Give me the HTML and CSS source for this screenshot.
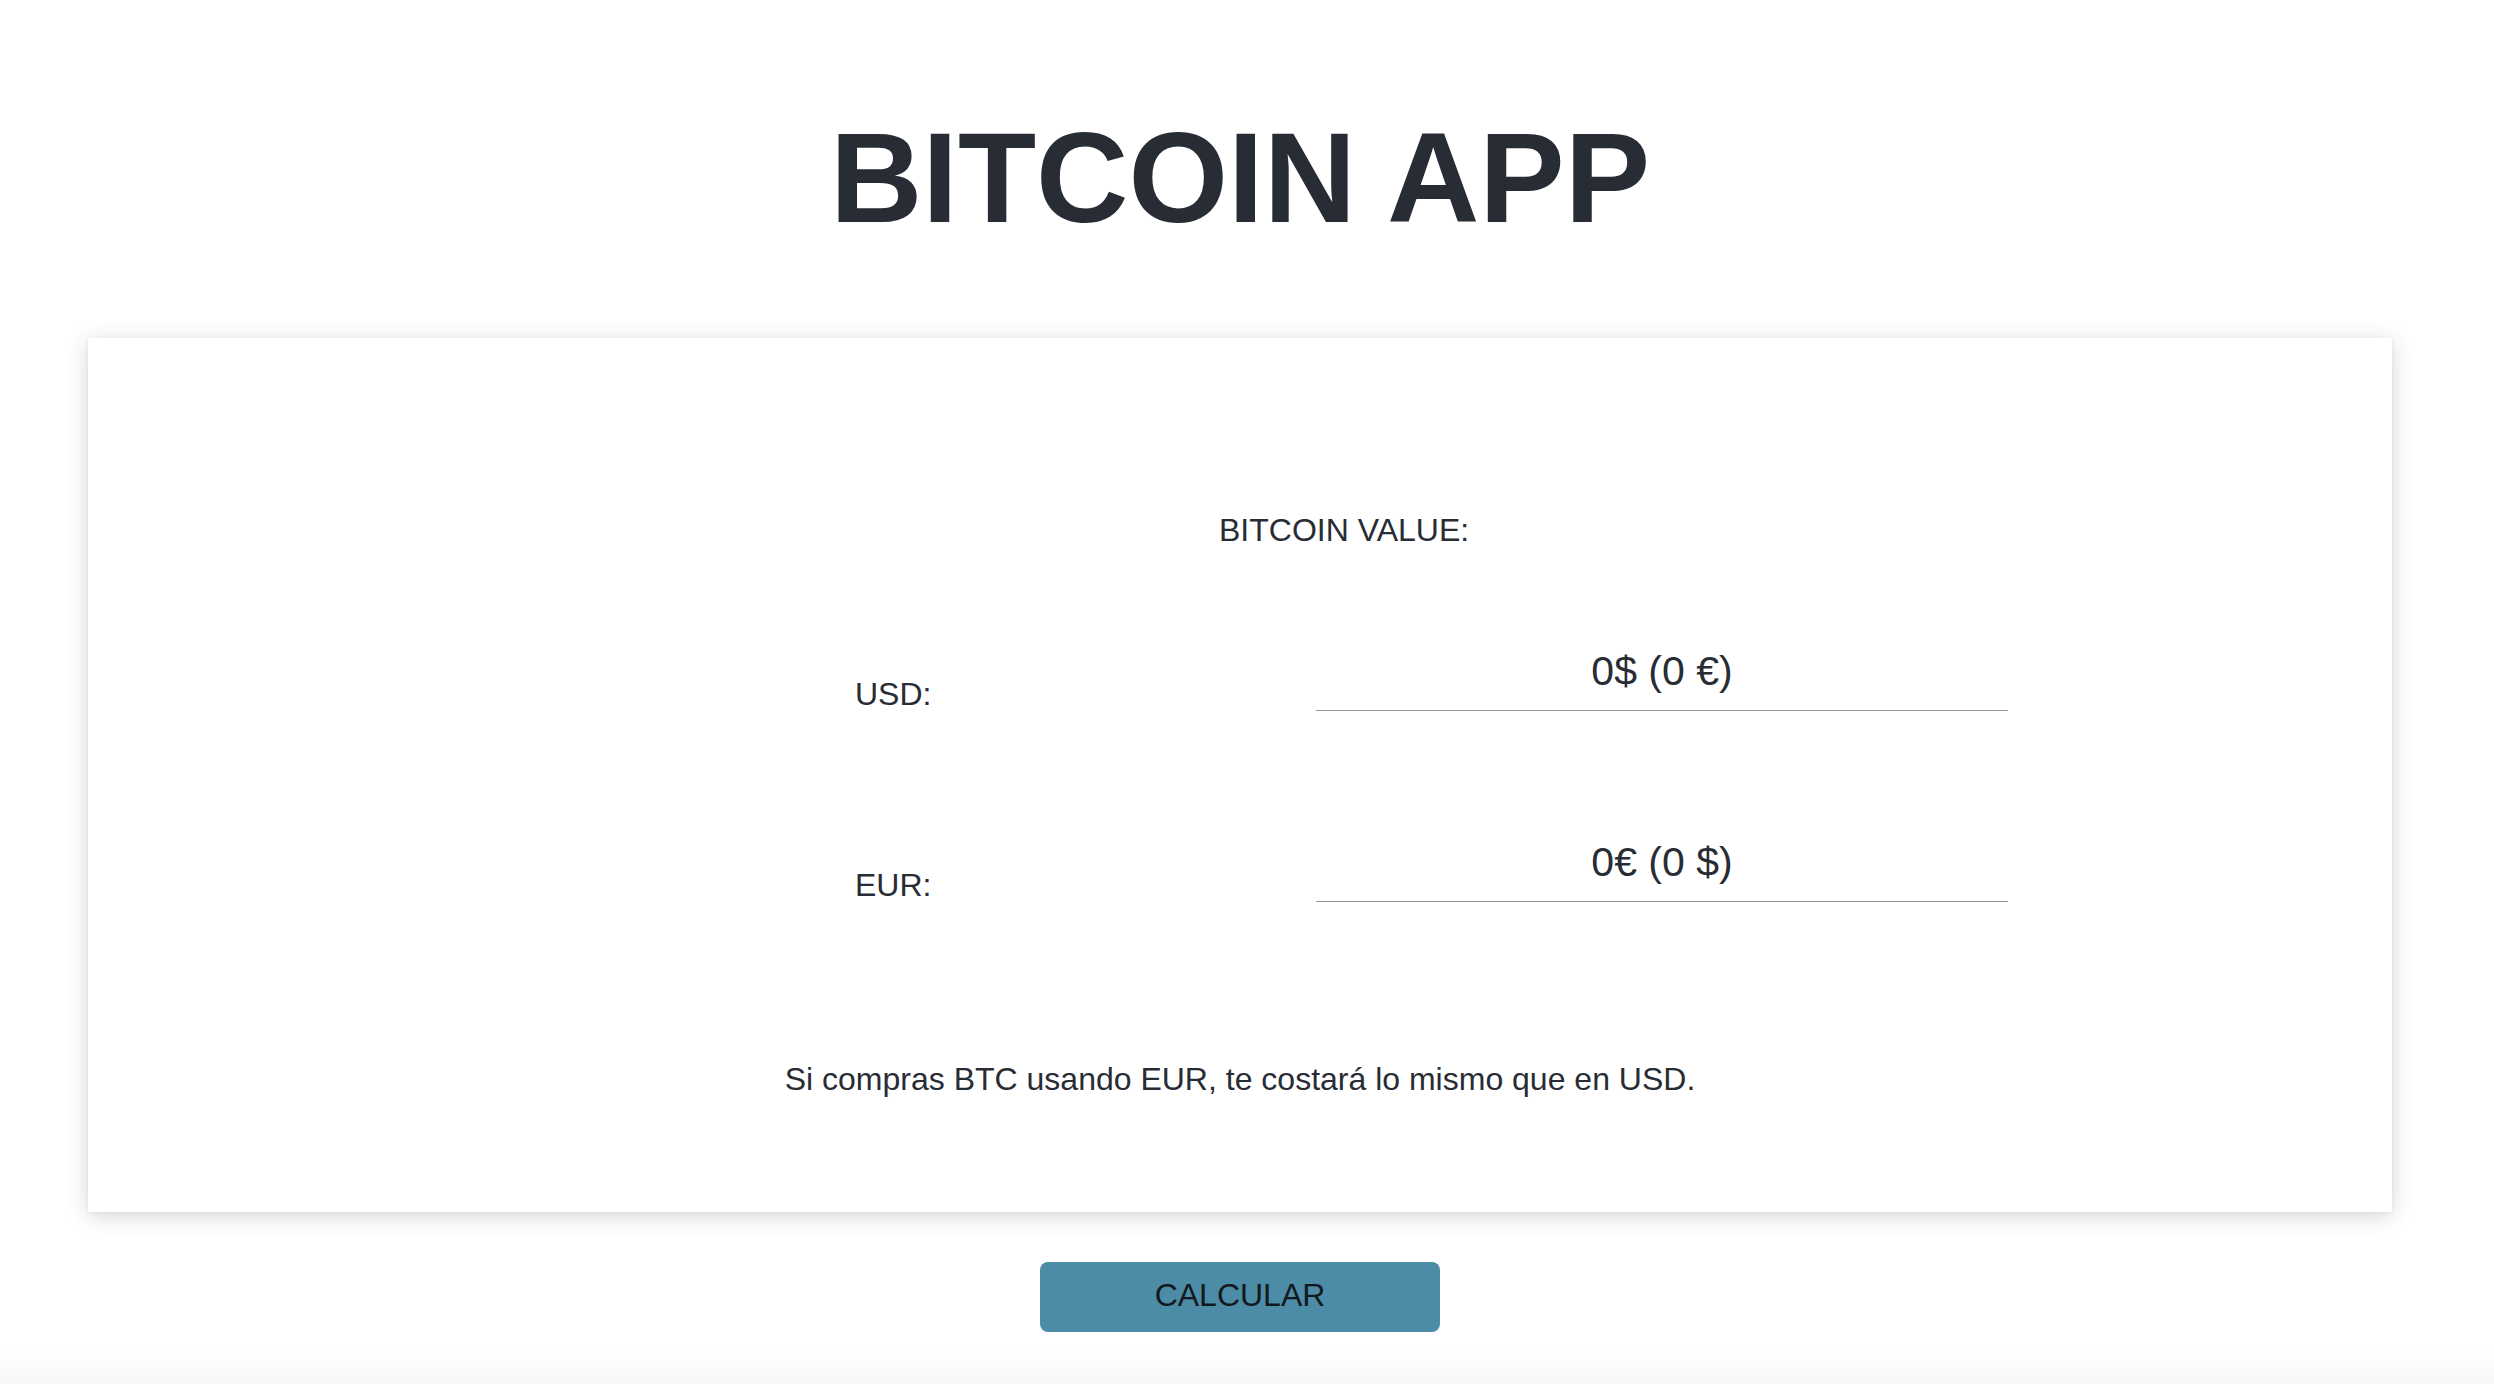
FILE: index.html
```
<!DOCTYPE html>
<html lang="es">
<head>
<meta charset="utf-8">
<title>Bitcoin App</title>
<link rel="stylesheet" href="styles.css">
</head>
<body>
<div class="app">
  <h1 class="title">BITCOIN APP</h1>
  <div class="card">
    <div class="card-head">BITCOIN VALUE:</div>
    <div class="rows">
      <div class="row">
        <div class="label">USD:</div>
        <div class="value">0$ (0 €)</div>
      </div>
      <div class="row">
        <div class="label">EUR:</div>
        <div class="value">0€ (0 $)</div>
      </div>
    </div>
    <p class="note">Si compras BTC usando EUR, te costará lo mismo que en USD.</p>
  </div>
  <div class="actions">
    <button class="btn" type="button">CALCULAR</button>
  </div>
</div>
</body>
</html>
```
FILE: styles.css
```
html, body {
  margin: 0;
  padding: 0;
}
body {
  min-height: 100vh;
  background: linear-gradient(to bottom, #ffffff 0, #ffffff 1350px, #f8f8f8 1384px);
  font-family: "Liberation Sans", Arial, sans-serif;
  color: #282c34;
}
.app {
  width: 2480px;
  padding-top: 104px;
}
.title {
  margin: 0;
  font-size: 128px;
  line-height: 148px;
  font-weight: 700;
  text-align: center;
  color: #282c34;
}
.card {
  margin: 86px 88px 0;
  background: #fff;
  box-shadow: 0 4px 22px rgba(0, 0, 0, 0.16), 0 1px 4px rgba(0, 0, 0, 0.06);
  padding: 174px 0 114px;
}
.card-head {
  margin-left: 1131px;
  font-size: 32px;
  line-height: 37px;
}
.rows {
  margin-top: 99px;
  margin-left: 767px;
  display: flex;
  flex-direction: column;
  gap: 128px;
}
.row {
  display: flex;
  align-items: flex-end;
}
.label {
  width: 461px;
  font-size: 32px;
  line-height: 34px;
}
.value {
  width: 692px;
  text-align: center;
  font-size: 41px;
  line-height: 46px;
  padding-bottom: 16px;
  border-bottom: 1px solid #959595;
}
.note {
  margin: 159px 0 0;
  text-align: center;
  font-size: 32px;
  line-height: 37px;
}
.actions {
  display: flex;
  justify-content: center;
  padding-top: 50px;
}
.btn {
  width: 400px;
  height: 70px;
  border: none;
  border-radius: 8px;
  background: #4c8ca7;
  color: #12191d;
  font-family: "Liberation Sans", Arial, sans-serif;
  font-size: 32px;
  padding: 0 0 3px;
  cursor: pointer;
}
```
